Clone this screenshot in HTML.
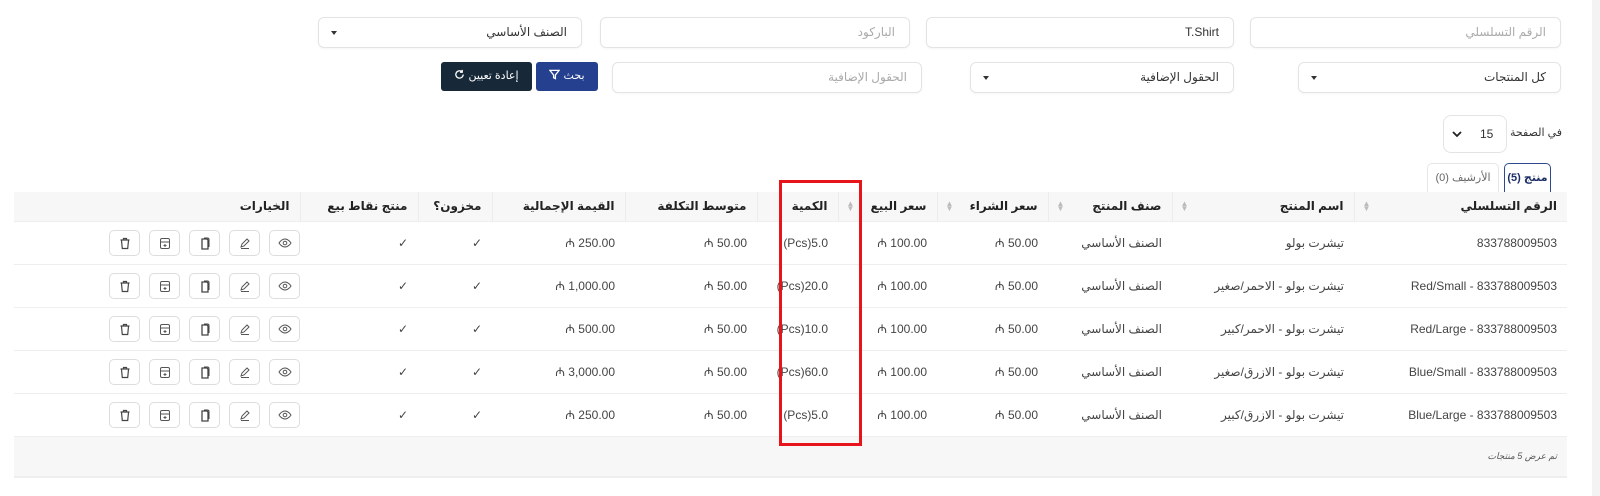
<!DOCTYPE html>
<html><head><meta charset="utf-8">
<style>
*{box-sizing:border-box;margin:0;padding:0}
body{width:1600px;height:496px;background:#fff;font-family:"Liberation Sans","DejaVu Sans",sans-serif;font-size:12px;color:#333;position:relative;overflow:hidden}
.strip{position:absolute;left:1592px;top:0;width:8px;height:496px;background:#f3f3f3}
.inp{position:absolute;height:31px;border:1px solid #e4e4e4;border-radius:6px;background:#fff;direction:rtl;padding:0 14px;line-height:29px;color:#aaa;font-size:12px;box-shadow:0 1px 2px rgba(0,0,0,.04)}
.inp.dark{color:#333}
.caret{position:absolute;left:12px;top:13px;width:0;height:0;border-left:3px solid transparent;border-right:3px solid transparent;border-top:4px solid #333}
.btn{position:absolute;height:29px;border-radius:3px;color:#fff;font-size:11px;direction:rtl;text-align:center;line-height:29px}
table{position:absolute;left:14px;top:192px;width:1553px;border-collapse:collapse;direction:rtl}
th{background:#f7f7f7;height:29px;font-weight:bold;font-size:12px;color:#222;text-align:right;padding:0 10px;border-left:1px solid #ececec;position:relative}
td{height:43px;text-align:right;padding:0 10px;border-top:1px solid #eee;font-size:12px;color:#444;white-space:nowrap}
.sort{position:absolute;left:8px;top:9px;color:#bbb;font-size:8px;line-height:5px}
.ib{display:inline-block;width:31px;height:26px;border:1px solid #ddd;border-radius:5px;margin-left:9px;vertical-align:middle;text-align:center;line-height:24px;background:#fff}
.ib svg{vertical-align:middle}
.foot td{background:#f7f7f7;height:41px;font-size:9px;color:#555;font-style:italic}
</style></head><body>
<div class="strip"></div>
<div class="inp" style="left:1250px;top:17px;width:311px">الرقم التسلسلي</div>
<div class="inp dark" style="left:926px;top:17px;width:308px">T.Shirt</div>
<div class="inp" style="left:600px;top:17px;width:310px">الباركود</div>
<div class="inp dark" style="left:318px;top:17px;width:264px">الصنف الأساسي<span class="caret"></span></div>
<div class="inp dark" style="left:1298px;top:62px;width:263px">كل المنتجات<span class="caret"></span></div>
<div class="inp dark" style="left:970px;top:62px;width:264px">الحقول الإضافية<span class="caret"></span></div>
<div class="inp" style="left:612px;top:62px;width:310px">الحقول الإضافية</div>
<div class="btn" style="left:536px;top:62px;width:62px;background:#25408f">بحث <svg width="11" height="11" viewBox="0 0 12 12" style="vertical-align:-1px"><path d="M1 1.5h10L7 6.5v4L5 9.5v-3z" fill="none" stroke="#fff" stroke-width="1.4"/></svg></div>
<div class="btn" style="left:441px;top:62px;width:91px;background:#172838">إعادة تعيين <svg width="11" height="11" viewBox="0 0 12 12" style="vertical-align:-1px"><path d="M10 6a4 4 0 1 1-1.2-2.9M9 1v2.5H6.5" fill="none" stroke="#fff" stroke-width="1.4"/></svg></div>
<div style="position:absolute;left:1500px;top:126px;width:62px;direction:rtl;font-size:11px;color:#333">في الصفحة</div>
<div style="position:absolute;left:1443px;top:115px;width:64px;height:38px;border:1px solid #e4e4e4;border-radius:8px;font-size:12px;line-height:36px"><span style="position:absolute;left:36px">15</span><svg style="position:absolute;left:8px;top:15px" width="10" height="7" viewBox="0 0 10 7"><path d="M1 1l4 4 4-4" fill="none" stroke="#222" stroke-width="1.8"/></svg></div>
<div style="position:absolute;left:1504px;top:163px;width:47px;height:30px;border:1px solid #2d4a8f;border-bottom:none;border-radius:5px 5px 0 0;background:#fff;font-weight:bold;color:#1d2f66;text-align:center;line-height:28px;font-size:11px;direction:rtl">منتج (5)</div>
<div style="position:absolute;left:1427px;top:163px;width:72px;height:29px;border:1px solid #e6e6e6;border-bottom:none;border-radius:5px 5px 0 0;color:#666;text-align:center;line-height:28px;font-size:11px;direction:rtl">الأرشيف (0)</div>
<table>
<colgroup><col style="width:213px"><col style="width:182px"><col style="width:124px"><col style="width:111px"><col style="width:99px"><col style="width:81px"><col style="width:132px"><col style="width:133px"><col style="width:74px"><col style="width:118px"><col></colgroup>
<tr><th>الرقم التسلسلي<span class="sort">▲<br>▼</span></th><th>اسم المنتج<span class="sort">▲<br>▼</span></th><th>صنف المنتج<span class="sort">▲<br>▼</span></th><th>سعر الشراء<span class="sort">▲<br>▼</span></th><th>سعر البيع<span class="sort">▲<br>▼</span></th><th>الكمية</th><th>متوسط التكلفة</th><th>القيمة الإجمالية</th><th>مخزون؟</th><th>منتج نقاط بيع</th><th style="border-left:none">الخيارات</th></tr>
<tr><td>833788009503</td><td>تيشرت بولو</td><td>الصنف الأساسي</td><td>50.00 ₼</td><td>100.00 ₼</td><td><span dir="ltr">(Pcs)5.0</span></td><td>50.00 ₼</td><td>250.00 ₼</td><td>✓</td><td>✓</td><td class="ops"></td></tr>
<tr><td>Red/Small - 833788009503</td><td>تيشرت بولو - الاحمر/صغير</td><td>الصنف الأساسي</td><td>50.00 ₼</td><td>100.00 ₼</td><td><span dir="ltr">(Pcs)20.0</span></td><td>50.00 ₼</td><td>1,000.00 ₼</td><td>✓</td><td>✓</td><td class="ops"></td></tr>
<tr><td>Red/Large - 833788009503</td><td>تيشرت بولو - الاحمر/كبير</td><td>الصنف الأساسي</td><td>50.00 ₼</td><td>100.00 ₼</td><td><span dir="ltr">(Pcs)10.0</span></td><td>50.00 ₼</td><td>500.00 ₼</td><td>✓</td><td>✓</td><td class="ops"></td></tr>
<tr><td>Blue/Small - 833788009503</td><td>تيشرت بولو - الازرق/صغير</td><td>الصنف الأساسي</td><td>50.00 ₼</td><td>100.00 ₼</td><td><span dir="ltr">(Pcs)60.0</span></td><td>50.00 ₼</td><td>3,000.00 ₼</td><td>✓</td><td>✓</td><td class="ops"></td></tr>
<tr><td>Blue/Large - 833788009503</td><td>تيشرت بولو - الازرق/كبير</td><td>الصنف الأساسي</td><td>50.00 ₼</td><td>100.00 ₼</td><td><span dir="ltr">(Pcs)5.0</span></td><td>50.00 ₼</td><td>250.00 ₼</td><td>✓</td><td>✓</td><td class="ops"></td></tr>
<tr class="foot"><td colspan="11" style="border-bottom:2px solid #eee">تم عرض 5 منتجات</td></tr>
</table>
<div style="position:absolute;left:779px;top:180px;width:83px;height:266px;border:3px solid #e8141b"></div>
<script>
var icons='<span class="ib"><svg width="14" height="12" viewBox="0 0 14 12"><path d="M1 6s2.5-4 6-4 6 4 6 4-2.5 4-6 4-6-4-6-4z" fill="none" stroke="#555"/><circle cx="7" cy="6" r="1.8" fill="none" stroke="#555"/></svg></span>'+
'<span class="ib"><svg width="12" height="12" viewBox="0 0 12 12"><path d="M2 10l1-3 5-5 2 2-5 5zM2 11.5h8" fill="none" stroke="#555"/></svg></span>'+
'<span class="ib"><svg width="12" height="13" viewBox="0 0 12 13"><path d="M3 2h5l1 1v9H3z" fill="none" stroke="#444" stroke-width="1.3"/><path d="M5 1h4l1 1v8" fill="none" stroke="#444"/></svg></span>'+
'<span class="ib"><svg width="12" height="13" viewBox="0 0 12 13"><rect x="1.5" y="1.5" width="9" height="10" rx="1.5" fill="none" stroke="#555"/><path d="M1.5 5h9M6 7v3M4.5 8.5h3" stroke="#555" fill="none"/></svg></span>'+
'<span class="ib"><svg width="12" height="13" viewBox="0 0 12 13"><path d="M1.5 3h9M4.5 3V1.5h3V3M2.5 3.5l.8 8h5.4l.8-8" fill="none" stroke="#444" stroke-width="1.2"/></svg></span>';
document.querySelectorAll('.ops').forEach(function(c){c.innerHTML=icons;c.style.paddingRight='0px'});
</script>
</body></html>
